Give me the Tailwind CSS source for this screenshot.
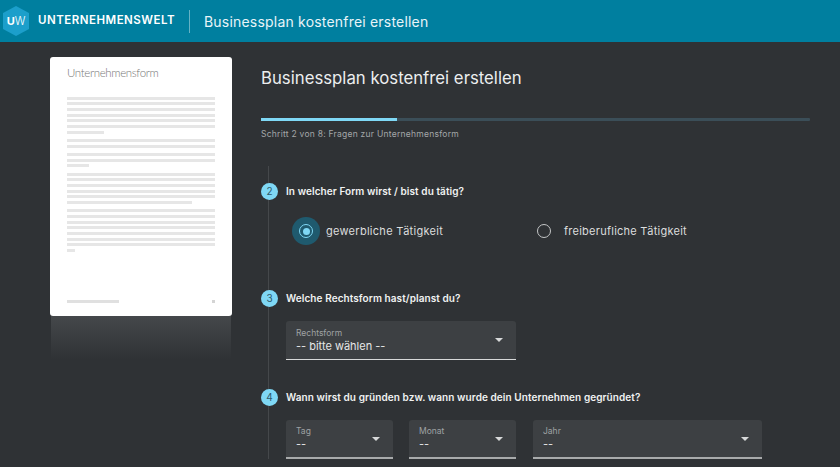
<!DOCTYPE html>
<html lang="de">
<head>
  <meta charset="UTF-8" />
  <title>Businessplan kostenfrei erstellen</title>
  <script src="https://cdn.jsdelivr.net/npm/@tailwindcss/browser@4"></script>
</head>
<body class="bg-[#2f3235] font-['Inter',sans-serif] h-[467px] overflow-hidden text-white">
  <header class="bg-[#007f9f] flex h-[42px] items-center pl-[2px]">
    <svg class="h-[30px] w-[28px]" viewBox="0 0 28 30">
      <polygon fill="#1c9fcb" points="14,0 27,7 27,23 14,30 1,23 1,7" />
      <text x="14" y="19" text-anchor="middle" fill="#fff" font-family="Inter" font-size="11" font-weight="700">U<tspan font-weight="300">W</tspan></text>
    </svg>
    <span class="font-semibold ml-[8px] text-[11.5px] tracking-[0.5px] w-[138px]">UNTERNEHMENSWELT</span>
    <span class="bg-white/40 h-[23px] ml-[13px] w-px"></span>
    <span class="ml-[14px] text-[14px] text-[#e8f4f8] tracking-[0.2px]">Businessplan kostenfrei erstellen</span>
  </header>

  <main class="flex pl-[50px] pt-[15px]">
    <aside class="shrink-0 w-[182px]">
      <div class="bg-white flex flex-col h-[259px] pb-[13px] px-[17px] pt-[7px] rounded-[3px]">
        <div class="font-['Lato',sans-serif] font-light leading-[17px] text-[#777] text-[11.5px] tracking-[-0.35px]">Unternehmensform</div>
        <div class="flex flex-col gap-[2.7px] mt-[15.5px]">
          <div class="bg-[#e6e6e6] h-[3px]"></div>
          <div class="bg-[#e6e6e6] h-[3px]"></div>
          <div class="bg-[#e6e6e6] h-[3px]"></div>
          <div class="bg-[#e6e6e6] h-[3px]"></div>
          <div class="bg-[#e6e6e6] h-[3px]"></div>
          <div class="bg-[#e6e6e6] h-[3px]"></div>
          <div class="bg-[#e6e6e6] h-[3px] w-[37px]"></div>
        </div>
        <div class="flex flex-col gap-[2.7px] mt-[5.3px]">
          <div class="bg-[#e6e6e6] h-[3px]"></div>
          <div class="bg-[#e6e6e6] h-[3px]"></div>
        </div>
        <div class="flex flex-col gap-[2.7px] mt-[5.3px]">
          <div class="bg-[#e6e6e6] h-[3px]"></div>
          <div class="bg-[#e6e6e6] h-[3px]"></div>
          <div class="bg-[#e6e6e6] h-[3px] w-[22px]"></div>
        </div>
        <div class="flex flex-col gap-[2.7px] mt-[5.3px]">
          <div class="bg-[#e6e6e6] h-[3px]"></div>
          <div class="bg-[#e6e6e6] h-[3px]"></div>
          <div class="bg-[#e6e6e6] h-[3px]"></div>
          <div class="bg-[#e6e6e6] h-[3px]"></div>
          <div class="bg-[#e6e6e6] h-[3px]"></div>
          <div class="bg-[#e6e6e6] h-[3px] w-[125px]"></div>
        </div>
        <div class="flex flex-col gap-[2.7px] mt-[5.3px]">
          <div class="bg-[#e6e6e6] h-[3px]"></div>
          <div class="bg-[#e6e6e6] h-[3px]"></div>
          <div class="bg-[#e6e6e6] h-[3px]"></div>
          <div class="bg-[#e6e6e6] h-[3px]"></div>
          <div class="bg-[#e6e6e6] h-[3px]"></div>
          <div class="bg-[#e6e6e6] h-[3px]"></div>
          <div class="bg-[#e6e6e6] h-[3px]"></div>
          <div class="bg-[#e6e6e6] h-[3px] w-[8px]"></div>
        </div>
        <div class="flex justify-between mt-auto">
          <div class="bg-[#e0e0e0] h-[3px] w-[52px]"></div>
          <div class="bg-[#d4d4d4] h-[3px] w-[3px]"></div>
        </div>
      </div>
      <div class="bg-gradient-to-b from-[#45484b] h-[44px] mx-px to-[#2f3235]"></div>
    </aside>

    <section class="flex-1 ml-[29px] mr-[30px]">
      <h1 class="font-normal leading-[24px] mt-[9px] text-[#eceeef] text-[16.75px]">Businessplan kostenfrei erstellen</h1>
      <div class="bg-[#3b4e58] h-[3px] mt-[28px] rounded-[1px]">
        <div class="bg-[#7fd8f5] h-[3px] w-[136px]"></div>
      </div>
      <p class="leading-[12px] mt-[7px] text-[#a4a7a9] text-[8.5px] tracking-[0.25px]">Schritt 2 von 8: Fragen zur Unternehmensform</p>

      <div class="border-[#45484b] border-l ml-[7px] mt-[26px] pt-[17px]">
        <div class="-ml-[8px] flex h-[17px] items-center">
          <span class="bg-[#7fd8f5] flex h-[17px] items-center justify-center rounded-full shrink-0 text-[#2f5a6a] text-[10px] w-[17px]">2</span>
          <span class="font-semibold ml-[8px] text-[#f1f2f2] text-[10px] tracking-[0.08px]">In welcher Form wirst / bist du tätig?</span>
        </div>
        <div class="flex h-[28px] items-center ml-[23px] mt-[17px]">
          <div class="flex items-center w-[245px]">
            <span class="bg-[#1f5a6e] flex h-[28px] items-center justify-center rounded-full w-[28px]">
              <span class="border-[#7fd8f5] border-[1.5px] flex h-[14px] items-center justify-center rounded-full w-[14px]">
                <span class="bg-[#7fd8f5] block h-[7px] rounded-full w-[7px]"></span>
              </span>
            </span>
            <span class="ml-[6px] text-[#dcdddd] text-[11px] tracking-[0.28px]">gewerbliche Tätigkeit</span>
          </div>
          <div class="flex items-center">
            <span class="block border-[#c4c6c7] border-[1.5px] h-[14px] rounded-full w-[14px]"></span>
            <span class="ml-[13px] text-[#dcdddd] text-[11px] tracking-[0.25px]">freiberufliche Tätigkeit</span>
          </div>
        </div>

        <div class="-ml-[8px] flex h-[17px] items-center mt-[45px]">
          <span class="bg-[#7fd8f5] flex h-[17px] items-center justify-center rounded-full shrink-0 text-[#2f5a6a] text-[10px] w-[17px]">3</span>
          <span class="font-semibold ml-[8px] text-[#f1f2f2] text-[10px] tracking-[0.08px]">Welche Rechtsform hast/planst du?</span>
        </div>
        <div class="bg-[#3d4043] border-[#d8d9da] border-b flex h-[39px] items-center justify-between ml-[17px] mt-[14px] pl-[10px] pr-[13px] rounded-t-[3px] w-[230px]">
          <div>
            <div class="leading-[11px] text-[#9fa2a4] text-[8.5px]">Rechtsform</div>
            <div class="leading-[14px] text-[#e6e7e7] text-[11px]">-- bitte wählen --</div>
          </div>
          <span class="border-l-[4px] border-r-[4px] border-t-[4px] border-l-transparent border-r-transparent border-t-[#d8d9da] h-0 w-0"></span>
        </div>

        <div class="-ml-[8px] flex h-[17px] items-center mt-[29px]">
          <span class="bg-[#7fd8f5] flex h-[17px] items-center justify-center rounded-full shrink-0 text-[#2f5a6a] text-[10px] w-[17px]">4</span>
          <span class="font-semibold ml-[8px] text-[#f1f2f2] text-[10px] tracking-[0.08px]">Wann wirst du gründen bzw. wann wurde dein Unternehmen gegründet?</span>
        </div>
        <div class="flex gap-[16px] ml-[17px] mt-[14px]">
          <div class="bg-[#3d4043] border-[#a8aaab] border-b-2 flex h-[39px] items-center justify-between pl-[10px] pr-[13px] rounded-t-[3px] w-[107px]">
            <div>
              <div class="leading-[11px] text-[#9fa2a4] text-[8.5px]">Tag</div>
              <div class="leading-[14px] text-[#e6e7e7] text-[11px]">--</div>
            </div>
            <span class="border-l-[4px] border-r-[4px] border-t-[4px] border-l-transparent border-r-transparent border-t-[#d8d9da] h-0 w-0"></span>
          </div>
          <div class="bg-[#3d4043] border-[#a8aaab] border-b-2 flex h-[39px] items-center justify-between pl-[10px] pr-[13px] rounded-t-[3px] w-[107px]">
            <div>
              <div class="leading-[11px] text-[#9fa2a4] text-[8.5px]">Monat</div>
              <div class="leading-[14px] text-[#e6e7e7] text-[11px]">--</div>
            </div>
            <span class="border-l-[4px] border-r-[4px] border-t-[4px] border-l-transparent border-r-transparent border-t-[#d8d9da] h-0 w-0"></span>
          </div>
          <div class="bg-[#3d4043] border-[#a8aaab] border-b-2 flex h-[39px] items-center justify-between ml-px pl-[10px] pr-[13px] rounded-t-[3px] w-[229px]">
            <div>
              <div class="leading-[11px] text-[#9fa2a4] text-[8.5px]">Jahr</div>
              <div class="leading-[14px] text-[#e6e7e7] text-[11px]">--</div>
            </div>
            <span class="border-l-[4px] border-r-[4px] border-t-[4px] border-l-transparent border-r-transparent border-t-[#d8d9da] h-0 w-0"></span>
          </div>
        </div>
      </div>
    </section>
  </main>
</body>
</html>
